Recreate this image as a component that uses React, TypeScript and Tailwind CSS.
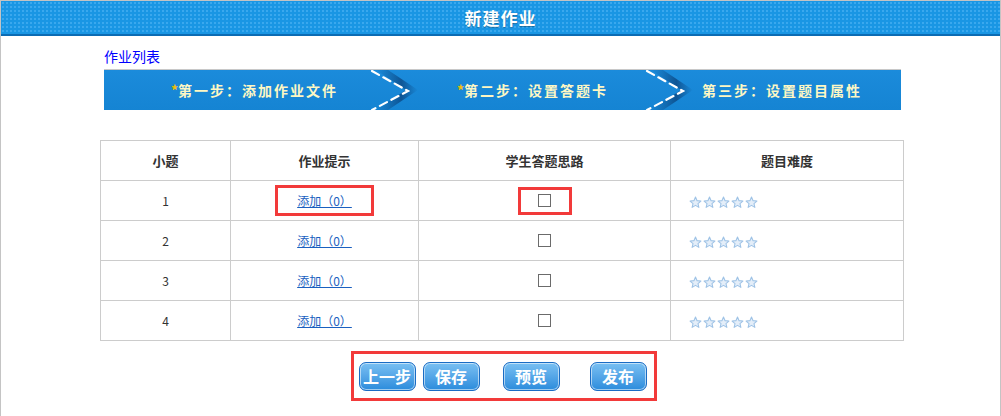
import React from "react";

const font = { fontFamily: '"Noto Sans CJK SC", "Liberation Sans", sans-serif' };

const Chevron = () => (
  <svg width="52" height="40" viewBox="0 0 52 40" className="shrink-0">
    <defs>
      <linearGradient id="shd" x1="0" x2="1" y1="0" y2="0">
        <stop offset="0" stopColor="#0a4f8c" stopOpacity="0" />
        <stop offset="0.6" stopColor="#0a3f78" stopOpacity="0.7" />
        <stop offset="1" stopColor="#0a3f78" stopOpacity="0" />
      </linearGradient>
    </defs>
    <polygon points="8,0 20,0 50,20 20,40 8,40 38,20" fill="url(#shd)" />
    <polyline
      points="4,1 40,21 4,40"
      fill="none"
      stroke="#ffffff"
      strokeWidth="2.2"
      strokeDasharray="8 5"
      strokeLinecap="round"
    />
  </svg>
);

const Star = () => (
  <svg width="13" height="13" viewBox="0 0 24 24">
    <polygon
      points="12,2 14.9,8.6 22,9.3 16.6,14 18.2,21 12,17.3 5.8,21 7.4,14 2,9.3 9.1,8.6"
      fill="#e4eef9"
      stroke="#9fc3e6"
      strokeWidth="2"
      strokeLinejoin="round"
    />
  </svg>
);

const Btn = ({ label, className = "" }: { label: string; className?: string }) => (
  <button
    className={`h-[29px] w-[57px] rounded-[7px] border border-[#1a6cc4] bg-gradient-to-b from-[#79c0f2] to-[#2a8cdc] text-[16px] font-bold text-white shadow-[inset_0_0_0_1px_rgba(255,255,255,0.55)] ${className}`}
  >
    {label}
  </button>
);

const rows = [1, 2, 3, 4];

export default function App() {
  return (
    <div
      className="w-[1001px] h-[416px] bg-white border-t border-x border-[#c4c4c4] overflow-hidden"
      style={font}
    >
      <div className="h-[35px] bg-[#1996e4] bg-[radial-gradient(#3aa8ee_1px,transparent_1px)] bg-[length:4px_4px] border-b-2 border-[#0c6bb3] flex items-center justify-center">
        <span className="text-white font-bold text-[17px] tracking-[1px] [text-shadow:0_1px_1px_rgba(0,0,0,0.3)]">
          新建作业
        </span>
      </div>

      <div className="pl-[103px] pt-[7px]">
        <a className="text-[14px] leading-[18px] text-[#0000ff] cursor-pointer">作业列表</a>
      </div>

      <div className="ml-[103px] mt-[2px] w-[797px] h-[41px] border-t border-[#c8c8c8] bg-gradient-to-b from-[#1b8bdb] to-[#1584d3] flex items-center text-[14px] font-bold tracking-[2px] text-[#fdf7c4]">
        <span className="ml-[67px] w-[197px] whitespace-nowrap">
          <span className="text-[#f5c000] tracking-normal">*</span>第一步：添加作业文件
        </span>
        <Chevron />
        <span className="ml-[37px] w-[186px] whitespace-nowrap">
          <span className="text-[#f5c000] tracking-normal">*</span>第二步：设置答题卡
        </span>
        <Chevron />
        <span className="ml-[7px] whitespace-nowrap">第三步：设置题目属性</span>
      </div>

      <table className="ml-[99px] mt-[30px] w-[804px] border-collapse text-center text-[#333]">
        <thead>
          <tr className="h-[40px] text-[13px] font-bold">
            <th className="w-[130px] border border-[#cccccc]">小题</th>
            <th className="w-[188px] border border-[#cccccc]">作业提示</th>
            <th className="w-[252px] border border-[#cccccc]">学生答题思路</th>
            <th className="border border-[#cccccc]">题目难度</th>
          </tr>
        </thead>
        <tbody>
          {rows.map((n) => (
            <tr key={n} className="h-[40px] text-[12px]">
              <td className="border border-[#cccccc]">{n}</td>
              <td className="border border-[#cccccc]">
                <span
                  className={`inline-flex items-center justify-center w-[99px] h-[31px] ${
                    n === 1 ? "border-[3px] border-[#f23a3a]" : ""
                  }`}
                >
                  <a className="text-[#1a5fbf] underline cursor-pointer">添加（0）</a>
                </span>
              </td>
              <td className="border border-[#cccccc]">
                <span
                  className={`inline-flex items-center justify-center w-[54px] h-[28px] ${
                    n === 1 ? "border-[3px] border-[#f23a3a]" : ""
                  }`}
                >
                  <span className="block w-[13px] h-[13px] border border-[#6b6b6b] bg-white" />
                </span>
              </td>
              <td className="border border-[#cccccc] text-left pl-[18px]">
                <span className="inline-flex gap-[1px] align-middle">
                  <Star />
                  <Star />
                  <Star />
                  <Star />
                  <Star />
                </span>
              </td>
            </tr>
          ))}
        </tbody>
      </table>

      <div className="flex justify-center mt-[10px] pl-[6px]">
        <div className="w-[306px] h-[50px] border-[3px] border-[#f23a3a] flex items-center pl-[5px]">
          <Btn label="上一步" />
          <Btn label="保存" className="ml-[7px]" />
          <Btn label="预览" className="ml-[23px]" />
          <Btn label="发布" className="ml-[30px]" />
        </div>
      </div>
    </div>
  );
}
